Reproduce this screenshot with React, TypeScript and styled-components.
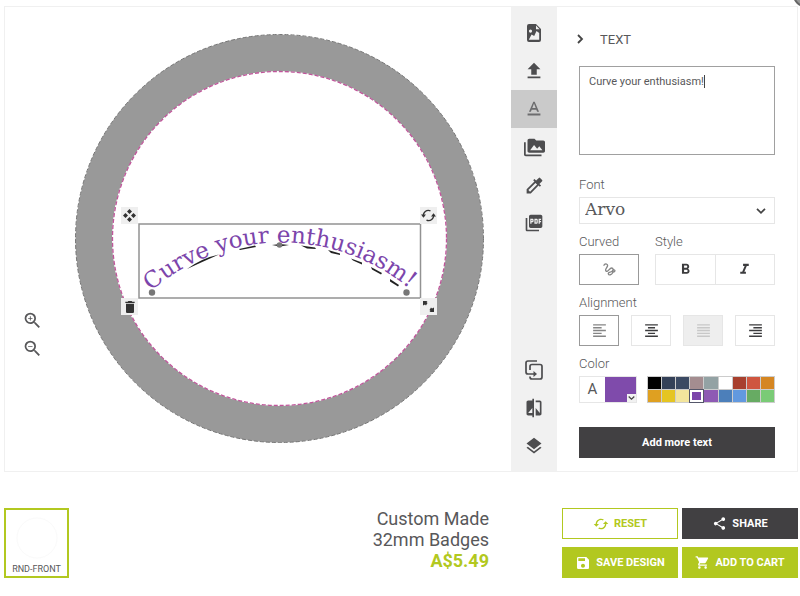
import React, { useState } from 'react';
import styled, { createGlobalStyle, css } from 'styled-components';
import {
  MdFileUpload,
  MdTextFormat,
  MdPermMedia,
  MdColorize,
  MdPictureAsPdf,
  MdCompare,
  MdLayers,
  MdZoomIn,
  MdZoomOut,
  MdCached,
  MdShare,
  MdSave,
  MdShoppingCart,
  MdDelete,
  MdFormatBold,
  MdFormatItalic,
  MdFormatAlignLeft,
  MdFormatAlignCenter,
  MdFormatAlignJustify,
  MdFormatAlignRight,
} from 'react-icons/md';

const lime = '#b2c820';
const charcoal = '#414042';
const ink = '#58585a';
const purple = '#7f4bab';
const line = '#e6e6e6';
const slab = '"DejaVu Serif", serif';

const GlobalStyle = createGlobalStyle`
  * { box-sizing: border-box; }
  body {
    margin: 0;
    background: #fff;
    color: ${ink};
    font-family: Roboto, sans-serif;
    overflow: hidden;
  }
  button, textarea, select { font-family: inherit; color: inherit; margin: 0; }
  button { padding: 0; cursor: pointer; }
  svg { display: block; flex: none; }
`;

const Page = styled.div`
  position: relative;
  padding: 6px 2px 0 4px;
`;

const CloseBadge = styled.svg`
  position: absolute;
  top: 0;
  right: 0;
`;

const Designer = styled.main`
  display: flex;
  border: 1px solid #f0f0f0;
`;

const Stage = styled.section`
  flex: 1;
  display: flex;
  min-width: 0;
`;

const ZoomControls = styled.div`
  display: flex;
  flex-direction: column;
  justify-content: flex-end;
  gap: 8px;
  width: 43px;
  padding: 0 0 113px 17px;
`;

const IconButton = styled.button`
  display: grid;
  place-items: center;
  width: 20px;
  height: 20px;
  border: 0;
  background: none;
`;

const ArtArea = styled.div`
  flex: 1;
  display: flex;
  justify-content: center;
  padding: 27px 0;
`;

const Artboard = styled.div`
  position: relative;
  width: 409px;
`;

const Handle = styled.button<{ $x: number; $y: number }>`
  position: absolute;
  left: ${(p) => p.$x}px;
  top: ${(p) => p.$y}px;
  display: grid;
  place-items: center;
  width: 17px;
  height: 17px;
  border: 0;
  background: #efefef;
  color: #333;
`;

const ToolBar = styled.nav`
  display: flex;
  flex-direction: column;
  justify-content: space-between;
  width: 46px;
  padding: 7px 0 6px;
  background: #f1f1f1;
`;

const ToolGroup = styled.div`
  display: flex;
  flex-direction: column;
`;

const Tool = styled.button<{ $active?: boolean }>`
  display: grid;
  place-items: center;
  height: 38px;
  border: 0;
  background: ${(p) => (p.$active ? '#cacaca' : 'transparent')};
  color: ${(p) => (p.$active ? '#6c6c6e' : '#4d4d4f')};
`;

const Panel = styled.aside`
  display: flex;
  flex-direction: column;
  gap: 10px;
  width: 240px;
  padding: 20px 22px 13px;
`;

const PanelHeader = styled.header`
  display: flex;
  align-items: center;
  gap: 16px;
  height: 24px;
  margin-bottom: 5px;
`;

const CollapseButton = styled.button`
  display: flex;
  justify-content: flex-end;
  width: 5px;
  border: 0;
  background: none;
`;

const PanelTitle = styled.h2`
  margin: 0;
  font-size: 13px;
  font-weight: 400;
`;

const TextEntry = styled.div`
  position: relative;
  height: 89px;
  margin-bottom: 12px;
`;

const TextBox = styled.textarea`
  display: block;
  width: 100%;
  height: 100%;
  padding: 7px 9px;
  border: 1px solid #a0a0a0;
  background: #fff;
  font-size: 11px;
  line-height: 16px;
  resize: none;
  outline: none;
`;

const Caret = styled.span`
  position: absolute;
  left: 125px;
  top: 9px;
  width: 1px;
  height: 13px;
  background: #444;
`;

const Field = styled.div`
  display: flex;
  flex-direction: column;
  gap: 4px;
`;

const FieldRow = styled.div`
  display: grid;
  grid-template-columns: 60px 1fr;
  gap: 16px;
`;

const labelText = css`
  font-size: 13px;
  font-weight: 300;
  line-height: 16px;
`;

const FieldLabel = styled.label`
  ${labelText}
`;

const GroupLabel = styled.span`
  ${labelText}
`;

const SelectWrap = styled.div`
  position: relative;
  height: 27px;

  svg {
    position: absolute;
    right: 9px;
    top: 11px;
    pointer-events: none;
  }
`;

const FontSelect = styled.select`
  appearance: none;
  width: 100%;
  height: 100%;
  padding: 0 5px 3px;
  border: 1px solid ${line};
  border-radius: 0;
  background: #fff;
  font-family: ${slab};
  font-size: 17px;
  line-height: 20px;
`;

const ButtonRow = styled.div<{ $gap: number }>`
  display: flex;
  gap: ${(p) => p.$gap}px;
`;

const OptionButton = styled.button<{ $selected?: boolean; $joined?: boolean }>`
  flex: 1;
  display: grid;
  place-items: center;
  height: 31px;
  border: 1px solid ${(p) => (p.$selected ? '#999' : line)};
  ${(p) => p.$joined && 'border-left: 0;'}
  background: #fff;
  color: ${(p) => (p.$selected ? '#858585' : '#3c3c3e')};

  &:disabled {
    background: #eee;
    color: #c8c8c8;
  }
`;

const ColorRow = styled.div`
  display: flex;
  gap: 10px;
  height: 27px;
`;

const ColorPreview = styled.button`
  position: relative;
  display: grid;
  grid-template-columns: 25px 1fr;
  width: 58px;
  border: 1px solid ${line};
  background: #fff;
  font-size: 15px;
  line-height: 25px;
`;

const ColorFill = styled.span`
  display: flex;
  align-items: flex-end;
  justify-content: flex-end;
  height: 25px;
  background: ${purple};
`;

const ColorArrow = styled.span`
  display: grid;
  place-items: center;
  width: 9px;
  height: 8px;
  background: #f1f1f1;
`;

const Palette = styled.div`
  flex: 1;
  display: grid;
  grid-template-columns: repeat(9, 1fr);
  grid-template-rows: repeat(2, 1fr);
  gap: 1px;
  padding: 1px;
  background: #ccc;
`;

const Swatch = styled.button<{ $color: string; $selected: boolean }>`
  border: 0;
  background: ${(p) => p.$color};
  ${(p) =>
    p.$selected &&
    css`
      border: 2px solid #fff;
      outline: 1px solid #55576a;
    `}
`;

const AddButton = styled.button`
  height: 31px;
  margin-top: 14px;
  border: 0;
  background: ${charcoal};
  color: #fff;
  font-size: 11px;
  font-weight: 700;
`;

const Footer = styled.footer`
  display: flex;
  align-items: flex-start;
  justify-content: space-between;
  padding-top: 36px;
`;

const ViewThumb = styled.button`
  display: flex;
  flex-direction: column;
  align-items: center;
  justify-content: space-between;
  width: 65px;
  height: 70px;
  padding: 6px 0 1px;
  border: 2px solid ${lime};
  background: #fff;
  font-size: 9px;
  line-height: 11px;
`;

const Checkout = styled.div`
  display: flex;
  gap: 73px;
`;

const Product = styled.div`
  font-size: 18px;
  line-height: 21px;
  text-align: right;
`;

const ProductName = styled.p`
  margin: 0;
`;

const Price = styled.p`
  margin: 0;
  color: ${lime};
  font-weight: 700;
`;

const Actions = styled.div`
  display: grid;
  grid-template-columns: 116px 116px;
  gap: 8px 4px;
`;

const ActionButton = styled.button<{ $kind: 'outline' | 'dark' | 'lime' }>`
  display: flex;
  align-items: center;
  justify-content: center;
  gap: 5px;
  height: 31px;
  border: 1px solid ${(p) => (p.$kind === 'dark' ? charcoal : lime)};
  background: ${(p) => ({ outline: '#fff', dark: charcoal, lime })[p.$kind]};
  color: ${(p) => (p.$kind === 'outline' ? lime : '#fff')};
  font-size: 11px;
  font-weight: 700;
  white-space: nowrap;
`;

const FileImageIcon = () => (
  <svg width="18" height="20" viewBox="0 0 18 20" aria-hidden="true">
    <path
      fill="currentColor"
      fillRule="evenodd"
      d="M4 1h7l5 5v11a2 2 0 0 1-2 2H4a2 2 0 0 1-2-2V3a2 2 0 0 1 2-2zM5.5 6.5a1.6 1.6 0 1 0 0 3.2 1.6 1.6 0 0 0 0-3.2zM3.8 16.8h10.4V10l-2.7-2-2.3 5-2.6-1.4zM11 2.6V6.2h3.6z"
    />
  </svg>
);

const DuplicateIcon = () => (
  <svg width="20" height="22" viewBox="0 0 20 22" fill="none" stroke="currentColor" strokeWidth="1.7" aria-hidden="true">
    <path d="M13 2H4a2 2 0 0 0-2 2v9a2 2 0 0 0 2 2h7" />
    <path d="M6 11V7.5a2 2 0 0 1 2-2h8a2 2 0 0 1 2 2V18a2 2 0 0 1-2 2H8a2 2 0 0 1-2-2v-.5" />
    <path d="M9.5 12l3.500 3-3.500 3z" fill="currentColor" stroke="none" />
  </svg>
);

const MoveIcon = () => (
  <svg width="13" height="13" viewBox="0 0 13 13" fill="currentColor" aria-hidden="true">
    <path d="M6.5 0L9 2.5 6.500 5 4 2.500zM6.500 8L9 10.500 6.500 13 4 10.500zM0 6.500L2.500 4 5 6.500 2.500 9zM8 6.500L10.500 4 13 6.500 10.500 9z" />
  </svg>
);

const RotateIcon = () => (
  <svg width="15" height="15" viewBox="0 0 15 15" fill="none" stroke="currentColor" strokeWidth="1.3" aria-hidden="true">
    <path d="M2.5 8.5A5 5 0 0 1 9.500 2.900M12.500 6.500A5 5 0 0 1 5.500 12.100" />
    <path d="M0 6.500h5L2.500 9.800zM10 8.500h5L12.500 5.200z" fill="currentColor" stroke="none" />
  </svg>
);

const ScaleIcon = () => (
  <svg width="13" height="13" viewBox="0 0 13 13" fill="currentColor" aria-hidden="true">
    <path d="M1 1h4.500l-1 1 1 1L4 5.500l-1-1-2 1zM12 12H7.500l1-1-1-1L9 7.500l1 1 2-1z" />
  </svg>
);

const DownChevron = ({ size = 10 }: { size?: number }) => (
  <svg width={size} height="6" viewBox="0 0 10 6" fill="none" stroke="#444" strokeWidth="1.7" aria-hidden="true">
    <path d="M1 .8l4 4 4-4" />
  </svg>
);

const RightChevron = () => (
  <svg width="7" height="10" viewBox="0 0 7 10" fill="none" stroke="#444" strokeWidth="1.8" aria-hidden="true">
    <path d="M1 1l4 4-4 4" />
  </svg>
);

const SquiggleIcon = () => (
  <svg width="13" height="13" viewBox="0 0 13 13" fill="none" stroke="currentColor" strokeWidth="1.3" strokeLinecap="round" aria-hidden="true">
    <path d="M1 2.2C2.5.2 5 .8 4.500 3S1.500 6.200 3 8s3.500-3 5.500-3 2 2 .6 3.200S4.800 9 5.300 10.800s3.400 1 4.200-.8S9.500 6.600 11 6.800s1.200 2.400-1 2.200" />
  </svg>
);

const swatches = [
  '#000000', '#344158', '#3b4a63', '#a48d90', '#93a2a4', '#ffffff', '#a8402e', '#cf5640', '#d58622',
  '#dfa021', '#e5c522', '#f3e59c', '#7c45ab', '#8e5ab4', '#4c7fba', '#6299df', '#67ab63', '#7acb76',
];

export default function App() {
  const [message, setMessage] = useState('Curve your enthusiasm!');
  const [color, setColor] = useState('#7c45ab');

  return (
    <>
      <GlobalStyle />
      <Page>
        <CloseBadge width="6" height="8" viewBox="0 0 6 8" aria-hidden="true">
          <circle cx="11" cy="-5" r="11" fill="#999" stroke="#666" strokeWidth="2" />
        </CloseBadge>
        <Designer>
          <Stage aria-label="Design">
            <ZoomControls>
              <IconButton aria-label="Zoom in"><MdZoomIn size={21} /></IconButton>
              <IconButton aria-label="Zoom out"><MdZoomOut size={21} /></IconButton>
            </ZoomControls>
            <ArtArea>
              <Artboard>
                <svg width="409" height="409" viewBox="75 34 409 409">
                  <circle cx="279.5" cy="238.5" r="185.5" fill="none" stroke="#999" strokeWidth="37" />
                  <circle cx="279.5" cy="238.5" r="204" fill="none" stroke="#777" strokeWidth="1" strokeDasharray="4 2" />
                  <circle cx="279.5" cy="238.5" r="167" fill="none" stroke="#fff" strokeWidth="1" />
                  <circle cx="279.5" cy="238.5" r="167" fill="none" stroke="#c0569b" strokeWidth="1.3" strokeDasharray="4 2" />
                  <rect x="139" y="224" width="281.5" height="74" fill="none" stroke="#929292" strokeWidth="1.5" />
                  <g fill="#222">
                    <path d="M187 269Q202 258 219 254.5Q202 262 187 269z" />
                    <path d="M239 249l16-3.5 1 1.5-16 3z" />
                    <path d="M272 245l8-1 9 1-9 1.5z" />
                    <path d="M301 245.5l14 2 1 1.5-9-.5z" />
                    <path d="M328 250l12 3.5v1.5l-9-2z" />
                    <path d="M351 258.5l11 4v2l-9-4z" />
                    <path d="M371 267l11 6-1 1.5-9-5z" />
                    <path d="M390 279l9 6-1 1.5-8-5z" />
                  </g>
                  <g fill="#777">
                    <circle cx="152" cy="292.5" r="3.2" />
                    <circle cx="279.5" cy="245" r="2.8" />
                    <circle cx="406.5" cy="292.5" r="3.2" />
                  </g>
                  <path id="curve" d="M151 291A200 200 0 0 1 412 291" fill="none" />
                  <text fill={color} fontFamily={slab} fontSize="23">
                    <textPath href="#curve">{message}</textPath>
                  </text>
                </svg>
                <Handle $x={46} $y={173} aria-label="Move"><MoveIcon /></Handle>
                <Handle $x={345} $y={173} aria-label="Rotate"><RotateIcon /></Handle>
                <Handle $x={46} $y={264} aria-label="Delete"><MdDelete size={16} /></Handle>
                <Handle $x={345} $y={264} aria-label="Scale"><ScaleIcon /></Handle>
              </Artboard>
            </ArtArea>
          </Stage>

          <ToolBar aria-label="Tools">
            <ToolGroup>
              <Tool aria-label="Template"><FileImageIcon /></Tool>
              <Tool aria-label="Upload"><MdFileUpload size={22} /></Tool>
              <Tool aria-label="Text" $active><MdTextFormat size={22} /></Tool>
              <Tool aria-label="Gallery"><MdPermMedia size={21} /></Tool>
              <Tool aria-label="Pick colour"><MdColorize size={21} /></Tool>
              <Tool aria-label="Export PDF"><MdPictureAsPdf size={20} /></Tool>
            </ToolGroup>
            <ToolGroup>
              <Tool aria-label="Duplicate"><DuplicateIcon /></Tool>
              <Tool aria-label="Mirror"><MdCompare size={20} /></Tool>
              <Tool aria-label="Layers"><MdLayers size={20} /></Tool>
            </ToolGroup>
          </ToolBar>

          <Panel>
            <PanelHeader>
              <CollapseButton aria-label="Collapse panel"><RightChevron /></CollapseButton>
              <PanelTitle>TEXT</PanelTitle>
            </PanelHeader>
            <TextEntry>
              <TextBox
                aria-label="Text"
                spellCheck={false}
                value={message}
                onChange={(e) => setMessage(e.target.value)}
              />
              <Caret />
            </TextEntry>
            <Field>
              <FieldLabel htmlFor="font">Font</FieldLabel>
              <SelectWrap>
                <FontSelect id="font" defaultValue="Arvo">
                  <option>Arvo</option>
                </FontSelect>
                <DownChevron />
              </SelectWrap>
            </Field>
            <FieldRow>
              <Field>
                <GroupLabel id="curved">Curved</GroupLabel>
                <ButtonRow $gap={0}>
                  <OptionButton $selected aria-labelledby="curved"><SquiggleIcon /></OptionButton>
                </ButtonRow>
              </Field>
              <Field>
                <GroupLabel id="style">Style</GroupLabel>
                <ButtonRow $gap={0} role="group" aria-labelledby="style">
                  <OptionButton aria-label="Bold"><MdFormatBold size={17} /></OptionButton>
                  <OptionButton $joined aria-label="Italic"><MdFormatItalic size={17} /></OptionButton>
                </ButtonRow>
              </Field>
            </FieldRow>
            <Field>
              <GroupLabel id="alignment">Alignment</GroupLabel>
              <ButtonRow $gap={12} role="group" aria-labelledby="alignment">
                <OptionButton $selected aria-label="Left"><MdFormatAlignLeft size={17} /></OptionButton>
                <OptionButton aria-label="Centre"><MdFormatAlignCenter size={17} /></OptionButton>
                <OptionButton disabled aria-label="Justify"><MdFormatAlignJustify size={17} /></OptionButton>
                <OptionButton aria-label="Right"><MdFormatAlignRight size={17} /></OptionButton>
              </ButtonRow>
            </Field>
            <Field>
              <GroupLabel id="color">Color</GroupLabel>
              <ColorRow>
                <ColorPreview aria-describedby="color">
                  A
                  <ColorFill>
                    <ColorArrow><DownChevron size={7} /></ColorArrow>
                  </ColorFill>
                </ColorPreview>
                <Palette role="group" aria-labelledby="color">
                  {swatches.map((c) => (
                    <Swatch key={c} $color={c} $selected={c === color} aria-label={c} onClick={() => setColor(c)} />
                  ))}
                </Palette>
              </ColorRow>
            </Field>
            <AddButton>Add more text</AddButton>
          </Panel>
        </Designer>

        <Footer>
          <ViewThumb>
            <svg width="44" height="44" viewBox="0 0 44 44" aria-hidden="true">
              <circle cx="22" cy="22" r="20" fill="none" stroke="#fafafa" />
            </svg>
            RND-FRONT
          </ViewThumb>
          <Checkout>
            <Product>
              <ProductName>Custom Made</ProductName>
              <ProductName>32mm Badges</ProductName>
              <Price>A$5.49</Price>
            </Product>
            <Actions>
              <ActionButton $kind="outline"><MdCached size={16} />RESET</ActionButton>
              <ActionButton $kind="dark"><MdShare size={15} />SHARE</ActionButton>
              <ActionButton $kind="lime"><MdSave size={16} />SAVE DESIGN</ActionButton>
              <ActionButton $kind="lime"><MdShoppingCart size={15} />ADD TO CART</ActionButton>
            </Actions>
          </Checkout>
        </Footer>
      </Page>
    </>
  );
}
